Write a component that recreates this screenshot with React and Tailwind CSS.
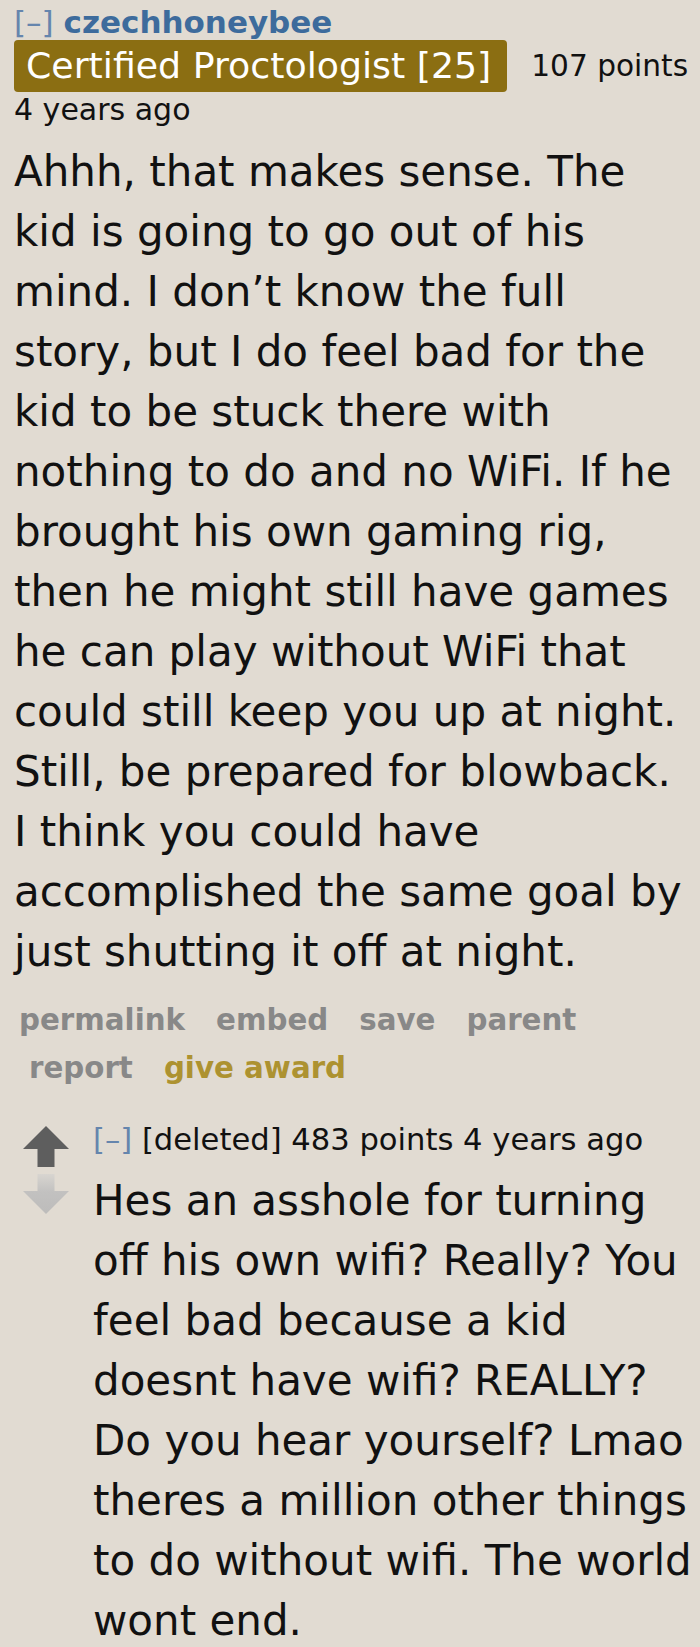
export default function App() {
  const body1 = [
    "Ahhh, that makes sense. The",
    "kid is going to go out of his",
    "mind. I don\u2019t know the full",
    "story, but I do feel bad for the",
    "kid to be stuck there with",
    "nothing to do and no WiFi. If he",
    "brought his own gaming rig,",
    "then he might still have games",
    "he can play without WiFi that",
    "could still keep you up at night.",
    "Still, be prepared for blowback.",
    "I think you could have",
    "accomplished the same goal by",
    "just shutting it off at night.",
  ];
  const body2 = [
    "Hes an asshole for turning",
    "off his own wifi? Really? You",
    "feel bad because a kid",
    "doesnt have wifi? REALLY?",
    "Do you hear yourself? Lmao",
    "theres a million other things",
    "to do without wifi. The world",
    "wont end.",
  ];
  return (
    <div
      className="w-[700px] h-[1647px] overflow-hidden bg-[#e1dbd2] text-[#111]"
      style={{ fontFamily: '"DejaVu Sans", Verdana, sans-serif' }}
    >
      <div className="pl-[14px] pt-[4px]">
        <div className="h-[36px] leading-[36px] text-[31px] whitespace-nowrap">
          <span className="text-[#6585ad]">[–]</span>{" "}
          <span className="font-bold text-[#3d6b9c]">czechhoneybee</span>
        </div>
        <div className="flex items-center h-[52px]">
          <div className="h-[52px] rounded-[4px] bg-[#8b6e12] text-white text-[36.3px] leading-[52px] pl-[12px] pr-[16px] whitespace-nowrap">
            Certified Proctologist [25]
          </div>
          <div className="ml-[24px] text-[29.6px] whitespace-nowrap">107 points</div>
        </div>
        <div className="h-[36px] leading-[36px] text-[30px] whitespace-nowrap">4 years ago</div>
        <div className="mt-[14px] text-[42px]">
          {body1.map((l, i) => (
            <div key={i} className="h-[60px] leading-[60px] whitespace-nowrap">{l}</div>
          ))}
        </div>
        <div className="mt-[14px] text-[29.3px] font-bold text-[#888]">
          <div className="h-[48px] leading-[48px] flex gap-[31px] pl-[5px] whitespace-nowrap">
            <span>permalink</span>
            <span>embed</span>
            <span>save</span>
            <span>parent</span>
          </div>
          <div className="h-[48px] leading-[48px] flex gap-[31px] pl-[15px] whitespace-nowrap">
            <span>report</span>
            <span className="text-[#ad9230]">give award</span>
          </div>
        </div>
      </div>
      <div className="flex mt-[30px] pl-[23px]">
        <div className="w-[46px] flex flex-col items-center pt-[4px]">
          <svg width="46" height="41" viewBox="0 0 46 41">
            <polygon points="23,0 46,23 31.5,23 31.5,41 14.5,41 14.5,23 0,23" fill="#5e5e5e" />
          </svg>
          <svg width="46" height="40" viewBox="0 0 46 40" className="mt-[7px]">
            <defs>
              <linearGradient id="dg" x1="0" y1="0" x2="0" y2="1">
                <stop offset="0" stopColor="#d8d5d0" />
                <stop offset="0.45" stopColor="#c2c1c0" />
                <stop offset="1" stopColor="#bdbcbb" />
              </linearGradient>
            </defs>
            <polygon points="14.5,0 31.5,0 31.5,17 46,17 23,40 0,17 14.5,17" fill="url(#dg)" />
          </svg>
        </div>
        <div className="ml-[24px]">
          <div className="h-[36px] leading-[36px] text-[30.6px] whitespace-nowrap">
            <span className="text-[#6585ad]">[–]</span> [deleted] 483 points 4 years ago
          </div>
          <div className="mt-[13px] text-[42px]">
            {body2.map((l, i) => (
              <div key={i} className="h-[60px] leading-[60px] whitespace-nowrap">{l}</div>
            ))}
          </div>
        </div>
      </div>
    </div>
  );
}
